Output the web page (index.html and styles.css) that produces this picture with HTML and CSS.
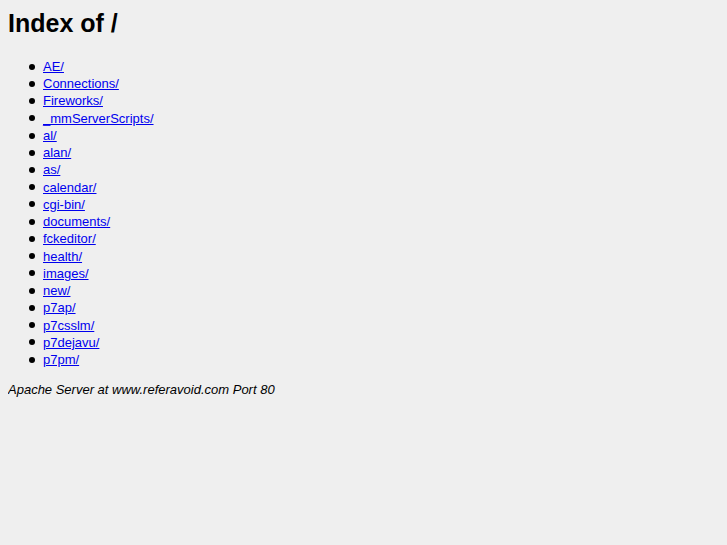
FILE: index.html
```html
<!DOCTYPE html>
<html>
<head>
<meta charset="utf-8">
<title>Index of /</title>
<link rel="stylesheet" href="styles.css">
</head>
<body class="page">
<h1 class="title">Index of /</h1>
<ul class="listing">
<li><a href="#">AE/</a></li>
<li><a href="#">Connections/</a></li>
<li><a href="#">Fireworks/</a></li>
<li><a href="#">_mmServerScripts/</a></li>
<li><a href="#">al/</a></li>
<li><a href="#">alan/</a></li>
<li><a href="#">as/</a></li>
<li><a href="#">calendar/</a></li>
<li><a href="#">cgi-bin/</a></li>
<li><a href="#">documents/</a></li>
<li><a href="#">fckeditor/</a></li>
<li><a href="#">health/</a></li>
<li><a href="#">images/</a></li>
<li><a href="#">new/</a></li>
<li><a href="#">p7ap/</a></li>
<li><a href="#">p7csslm/</a></li>
<li><a href="#">p7dejavu/</a></li>
<li><a href="#">p7pm/</a></li>
</ul>
<address class="sig">Apache Server at www.referavoid.com Port 80</address>
</body>
</html>
```
FILE: styles.css
```css
html { background: #efefef; }
.page {
  margin: 8px;
  font-family: "Liberation Sans", Arial, sans-serif;
  font-size: 13px;
  line-height: 17.24px;
  color: #000;
}
.title {
  font-size: 25px;
  line-height: 30px;
  font-weight: bold;
  margin: 0 0 20px;
}
.listing {
  margin: 0 0 13px;
  padding-left: 21px;
  list-style: none;
}
.listing li {
  display: flex;
  align-items: center;
}
.listing li::before {
  content: "";
  width: 6px;
  height: 6px;
  border-radius: 50%;
  background: #000;
  margin-right: 8px;
  flex: none;
}
.listing a { color: #0000ee; }
.sig { font-style: italic; }
```
